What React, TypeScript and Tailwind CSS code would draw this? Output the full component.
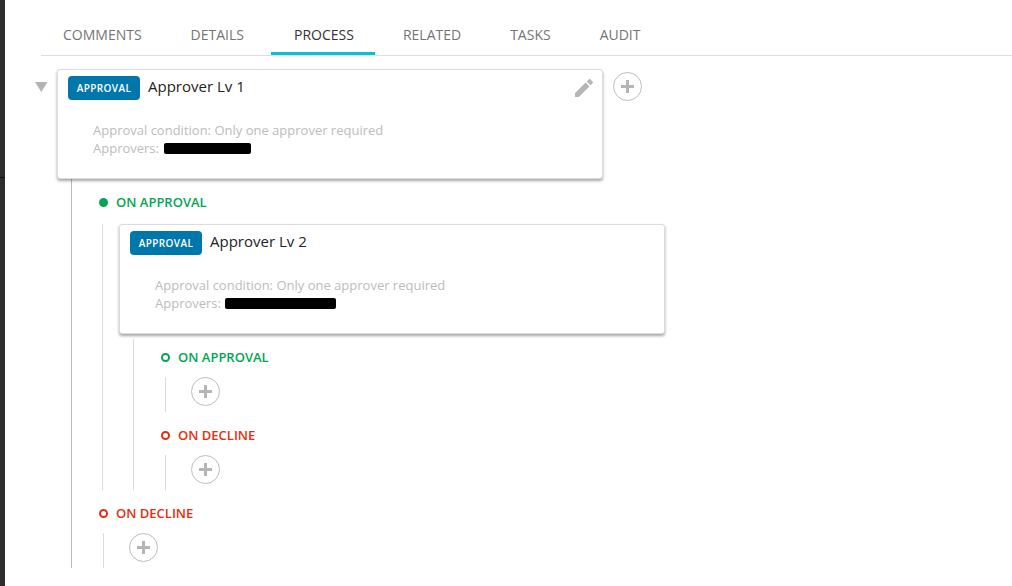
const tabs = [
  { name: 'COMMENTS', offset: '-ml-px' },
  { name: 'DETAILS', offset: '' },
  { name: 'PROCESS', offset: 'ml-px' },
  { name: 'RELATED', offset: '' },
  { name: 'TASKS', offset: '' },
  { name: 'AUDIT', offset: '' },
];

function AddButton({ className = '' }: { className?: string }) {
  return (
    <div className={`w-[29px] h-[29px] rounded-full border border-[#bdbdbd] bg-white flex items-center justify-center shrink-0 ${className}`}>
      <svg width="15" height="15" viewBox="0 0 15 15">
        <path d="M6 1h3v5h5v3H9v5H6V9H1V6h5z" fill="#b5b5b5" />
      </svg>
    </div>
  );
}

function ApprovalCard({ title, redactedClass, editable }: { title: string; redactedClass: string; editable?: boolean }) {
  return (
    <div className="relative w-[546px] h-[110px] bg-white rounded-[3px] border border-[#dcdcdc] shadow-[0_2px_3px_rgba(0,0,0,0.35)]">
      <div className="flex items-start pl-[10px] pt-[6px]">
        <span className="w-[72px] h-[24px] rounded-[4px] bg-[#0077aa] text-white text-[10px] font-semibold tracking-[0.4px] flex items-center justify-center">
          APPROVAL
        </span>
        <span className="ml-[8px] -mt-[1px] text-[15px] leading-[22px] text-[#222]">{title}</span>
      </div>
      {editable && (
        <svg width="18" height="18" viewBox="0 0 18 18" className="absolute right-[9px] top-[9px]">
          <path d="M0 18v-3.8L10.6 3.6l3.8 3.8L3.8 18zM11.8 2.4 13.9.3a1 1 0 0 1 1.4 0l2.4 2.4a1 1 0 0 1 0 1.4l-2.1 2.1z" fill="#b5b5b5" />
        </svg>
      )}
      <div className="pl-[35px] pt-[21px] text-[13px] leading-[18px] text-[#bcbcbc]">
        <div>Approval condition: Only one approver required</div>
        <div className="flex items-center">
          <span>Approvers:</span>
          <span className={`h-[11px] rounded-[2px] bg-black ${redactedClass}`} />
        </div>
      </div>
    </div>
  );
}

function BranchLabel({ text, color, filled }: { text: string; color: 'green' | 'red'; filled?: boolean }) {
  const dot =
    color === 'green'
      ? filled
        ? 'bg-[#00a651] border-[#00a651]'
        : 'border-[#00a651]'
      : 'border-[#e2300f]';
  return (
    <div className="flex items-center h-[18px]">
      <span className={`w-[9px] h-[9px] rounded-full border-2 ${dot}`} />
      <span className={`ml-[8px] text-[13px] font-semibold mt-[1px] ${color === 'green' ? 'text-[#00a651]' : 'text-[#e2300f]'}`}>
        {text}
      </span>
    </div>
  );
}

export default function App() {
  return (
    <div className="w-[1012px] h-[586px] overflow-hidden bg-white flex font-['Open_Sans',sans-serif]">
      <div className="w-[5px] h-full bg-[#2d2d2d] pt-[177px]">
        <div className="h-px bg-[#0f0f0f]" />
      </div>
      <div className="flex-1 min-w-0">
        <div className="ml-[36px] h-[56px] pt-[17px] border-b border-[#dddddd] flex gap-[5px]">
          {tabs.map((tab) => (
            <div
              key={tab.name}
              className={`h-[38px] pl-[23px] pr-[21px] text-[14px] leading-[36px] ${tab.offset} ${tab.name === 'PROCESS' ? 'text-[#333] border-b-[3px] border-[#00c4d6]' : 'text-[#757575]'}`}
            >
              {tab.name}
            </div>
          ))}
        </div>

        <div className="pl-[30px] pt-[13px] flex items-start">
          <svg width="13" height="11" viewBox="0 0 13 11" className="mt-[13px] shrink-0">
            <path d="M0 0h12.5L6.25 10z" fill="#b3b3b3" />
          </svg>
          <div className="ml-[9px]">
            <div className="flex items-start">
              <ApprovalCard title="Approver Lv 1" redactedClass="ml-[5px] w-[87px]" editable />
              <AddButton className="ml-[10px] mt-[3px]" />
            </div>

            <div className="ml-[14px] h-[389px] border-l border-[#bbbbbb] pl-[27px] pt-[14px]">
              <BranchLabel text="ON APPROVAL" color="green" filled />
              <div className="ml-[3px] mt-[13px] h-[266px] border-l border-[#dcdcdc] pl-[16px]">
                <ApprovalCard title="Approver Lv 2" redactedClass="ml-[4px] w-[111px]" />
                <div className="ml-[14px] mt-[5px] h-[151px] border-l border-[#dcdcdc] pl-[27px] pt-[9px]">
                  <BranchLabel text="ON APPROVAL" color="green" />
                  <div className="ml-[4px] mt-[11px] h-[35px] border-l border-[#dcdcdc] pl-[25px]">
                    <AddButton />
                  </div>
                  <div className="mt-[14px]">
                    <BranchLabel text="ON DECLINE" color="red" />
                  </div>
                  <div className="ml-[4px] mt-[11px] h-[35px] border-l border-[#dcdcdc] pl-[25px]">
                    <AddButton />
                  </div>
                </div>
              </div>
              <div className="mt-[14px]">
                <BranchLabel text="ON DECLINE" color="red" />
              </div>
              <div className="ml-[4px] mt-[11px] h-[35px] border-l border-[#dcdcdc] pl-[25px]">
                <AddButton />
              </div>
            </div>
          </div>
        </div>
      </div>
    </div>
  );
}
